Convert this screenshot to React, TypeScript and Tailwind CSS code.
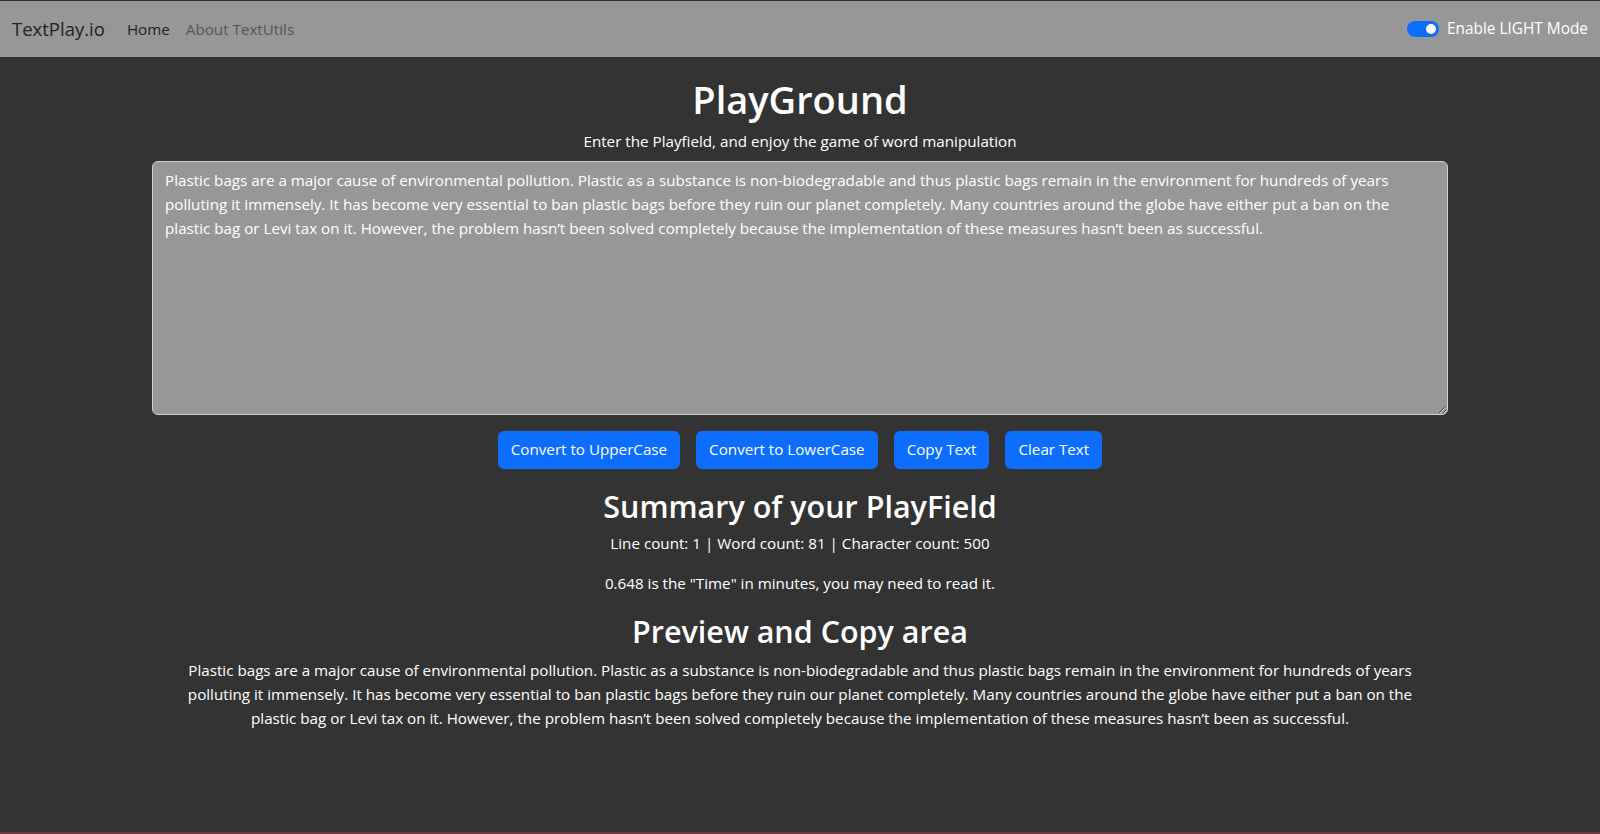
import { useState } from "react";

const SAMPLE =
  "Plastic bags are a major cause of environmental pollution. Plastic as a substance is non-biodegradable and thus plastic bags remain in the environment for hundreds of years polluting it immensely. It has become very essential to ban plastic bags before they ruin our planet completely. Many countries around the globe have either put a ban on the plastic bag or Levi tax on it. However, the problem hasn’t been solved completely because the implementation of these measures hasn’t been as successful.";

export default function App() {
  const [text, setText] = useState(SAMPLE);
  const [light, setLight] = useState(false);

  const words = text.split(/\s+/).filter((w) => w.length > 0).length;
  const lines = text.split("\n").length;
  const minutes = (0.008 * words).toFixed(3);

  const btn =
    "rounded-md bg-[#0d6efd] px-[13px] h-[38px] text-[15.2px] text-white hover:bg-[#0b5ed7]";

  return (
    <div
      className="min-h-[834px] bg-[#333333] text-white border-t border-[#2c3440] border-b-2 border-b-[#6b3a3e]"
      style={{ fontFamily: '"Open Sans", "Noto Sans", sans-serif' }}
    >
      {/* Navbar */}
      <nav className="flex h-[56px] items-center justify-between bg-[#979797] px-3">
        <div className="flex items-center">
          <span className="mr-[14px] text-[18.5px] text-[#222]">TextPlay.io</span>
          <a className="px-2 text-[15.2px] text-[#1f1f1f]">Home</a>
          <a className="px-2 text-[15.2px] text-[#555]">About TextUtils</a>
        </div>
        <label className="flex items-center gap-2 text-[15.4px] text-white">
          <button
            type="button"
            onClick={() => setLight(!light)}
            className="relative h-4 w-8 rounded-full bg-[#0d6efd]"
          >
            <span className="absolute right-[3px] top-[3px] h-[10px] w-[10px] rounded-full bg-white" />
          </button>
          Enable LIGHT Mode
        </label>
      </nav>

      <div className="mx-auto w-[1320px] px-3">
        <h1 className="mt-[20px] text-center text-[38px] font-semibold leading-[1.2]">PlayGround</h1>
        <p className="mt-[6px] text-center text-[15.2px] leading-6">
          Enter the Playfield, and enjoy the game of word manipulation
        </p>
        <textarea
          value={text}
          onChange={(e) => setText(e.target.value)}
          rows={8}
          className="mt-[8px] block h-[254px] w-full resize-y rounded-md border border-[#d0d0d0] bg-[#979797] px-3 py-[6px] text-[15.2px] leading-6 text-white outline-none"
        />
        <div className="mt-[16px] flex justify-center gap-4">
          <button type="button" className={btn} onClick={() => setText(text.toUpperCase())}>
            Convert to UpperCase
          </button>
          <button type="button" className={btn} onClick={() => setText(text.toLowerCase())}>
            Convert to LowerCase
          </button>
          <button type="button" className={btn} onClick={() => navigator.clipboard?.writeText(text)}>
            Copy Text
          </button>
          <button type="button" className={btn} onClick={() => setText("")}>
            Clear Text
          </button>
        </div>

        <h2 className="mt-[19px] text-center text-[30.5px] font-semibold leading-[1.2]">
          Summary of your PlayField
        </h2>
        <p className="mt-[7px] text-center text-[15.2px] leading-6">
          Line count: {lines} | Word count: {words} | Character count: {text.length}
        </p>
        <p className="mt-[16px] text-center text-[15.2px] leading-6">
          {minutes} is the "Time" in minutes, you may need to read it.
        </p>

        <h2 className="mt-[18px] text-center text-[30.5px] font-semibold leading-[1.2]">
          Preview and Copy area
        </h2>
        <p className="mt-[8px] px-3 text-center text-[15.2px] leading-6">{text}</p>
      </div>
    </div>
  );
}
